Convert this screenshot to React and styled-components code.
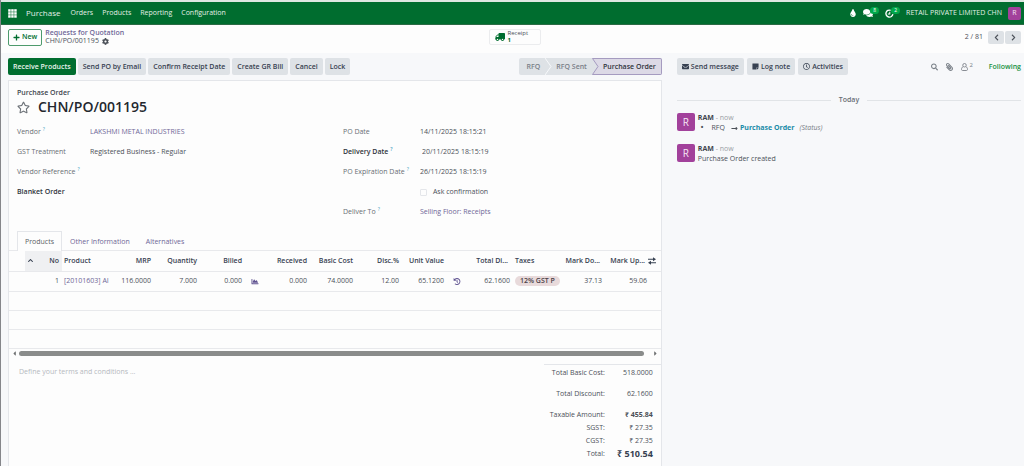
import React, { useState } from 'react'
import styled, { createGlobalStyle } from 'styled-components'
import {
  FaTruck, FaTint, FaComments, FaEnvelope, FaStickyNote, FaRegClock, FaSearch,
  FaPaperclip, FaCog, FaPlus, FaRegStar, FaHistory, FaChartArea,
  FaChevronLeft, FaChevronRight, FaChevronUp, FaCaretLeft, FaCaretRight, FaLongArrowAltRight,
} from 'react-icons/fa'

const leftFields = [
  { label: 'Vendor', help: true, value: 'LAKSHMI METAL INDUSTRIES', link: true },
  { label: 'GST Treatment', value: 'Registered Business - Regular' },
  { label: 'Vendor Reference', help: true },
  { label: 'Blanket Order', strong: true },
]

const columns = [
  { width: 16 },
  { width: 37, label: 'No', value: '1', sorted: true },
  { width: 49, label: 'Product', value: '[20101603] AI', left: true, link: true },
  { width: 43, label: 'MRP', value: '116.0000' },
  { width: 46, label: 'Quantity', value: '7.000' },
  { width: 45, label: 'Billed', value: '0.000' },
  { width: 18, icon: 'Forecast' },
  { width: 47, label: 'Received', value: '0.000' },
  { width: 46, label: 'Basic Cost', value: '74.0000' },
  { width: 46, label: 'Disc.%', value: '12.00' },
  { width: 45, label: 'Unit Value', value: '65.1200' },
  { width: 18, icon: 'History' },
  { width: 48, label: 'Total Di...', value: '62.1600', cut: true },
  { width: 46, label: 'Taxes', value: '12% GST P', left: true, tag: true },
  { width: 46, label: 'Mark Do...', value: '37.13', cut: true },
  { width: 45, label: 'Mark Up...', value: '59.06', cut: true },
  { width: 11, options: true },
]

const totals = [
  { label: 'Total Basic Cost:', value: '518.0000', tall: true },
  { label: 'Total Discount:', value: '62.1600', tall: true },
  { label: 'Taxable Amount:', value: '₹ 455.84', bold: true },
  { label: 'SGST:', value: '₹ 27.35' },
  { label: 'CGST:', value: '₹ 27.35' },
  { label: 'Total:', value: '₹ 510.54', big: true },
]

const Field = ({ label, help, strong, htmlFor, children }) => (
  <FieldRow>
    <FieldLabel as={htmlFor ? 'label' : 'span'} htmlFor={htmlFor} $strong={strong}>
      {label}
      {help && <Help>?</Help>}
    </FieldLabel>
    <FieldValue>{children}</FieldValue>
  </FieldRow>
)

const Message = ({ children }) => (
  <MessageRow>
    <Avatar $size={18}>R</Avatar>
    <MessageBody>
      <div><Author>RAM</Author> <Muted>- now</Muted></div>
      {children}
    </MessageBody>
  </MessageRow>
)

const Cell = ({ col }) => {
  if (col.icon) {
    return (
      <Td $left>
        <CellButton aria-label={col.icon}>
          {col.icon === 'History' ? <FaHistory /> : <FaChartArea />}
        </CellButton>
      </Td>
    )
  }
  return (
    <Td $left={col.left}>
      {col.tag ? <Tag>{col.value}</Tag> : col.link ? <Link href="#product">{col.value}</Link> : col.value}
    </Td>
  )
}

const App = () => {
  const [ask, setAsk] = useState(false)
  const [tab, setTab] = useState('Products')

  return (
    <Page>
      <GlobalStyle />
      <Navbar>
        <AppsButton aria-label="Apps">
          <svg viewBox="0 0 9 9">
            {[0, 3, 6].map(y => [0, 3, 6].map(x => (
              <rect key={`${x}-${y}`} x={x + 0.2} y={y + 0.2} width="2.5" height="2.5" fill="#fff" />
            )))}
          </svg>
        </AppsButton>
        <Brand href="#purchase">Purchase</Brand>
        <Menu>
          {['Orders', 'Products', 'Reporting', 'Configuration'].map(item => (
            <NavLink key={item} href={`#${item}`}>{item}</NavLink>
          ))}
        </Menu>
        <Tray>
          <TrayButton aria-label="Theme"><FaTint /></TrayButton>
          <TrayButton aria-label="Messages" $size={10}><FaComments /><Badge>8</Badge></TrayButton>
          <TrayButton aria-label="Activities" $size={9}>
            <svg viewBox="0 0 16 16" fill="none" stroke="#fff" strokeWidth="2.4">
              <path d="M10 2.3A6.2 6.2 0 1 0 14 9" />
              <path d="M8.500 5V9H5" strokeWidth="1.800" />
            </svg>
            <Badge>2</Badge>
          </TrayButton>
          <Company>RETAIL PRIVATE LIMITED CHN</Company>
          <Avatar $size={13}>R</Avatar>
        </Tray>
      </Navbar>

      <ControlPanel>
        <Crumbs>
          <NewButton><FaPlus />New</NewButton>
          <div>
            <Link href="#rfq" $medium>Requests for Quotation</Link>
            <Current>CHN/PO/001195 <FaCog /></Current>
          </div>
        </Crumbs>
        <StatButton>
          <FaTruck />
          <span>Receipt<b>1</b></span>
        </StatButton>
        <Pager>
          <span>2 / 81</span>
          <PagerButtons>
            <PagerButton aria-label="Previous"><FaChevronLeft /></PagerButton>
            <PagerButton aria-label="Next"><FaChevronRight /></PagerButton>
          </PagerButtons>
        </Pager>
      </ControlPanel>

      <Content>
        <FormColumn>
          <StatusBar>
            <Buttons>
              <Button $primary>Receive Products</Button>
              <Button>Send PO by Email</Button>
              <Button>Confirm Receipt Date</Button>
              <Button>Create GR Bill</Button>
              <Button>Cancel</Button>
              <Button>Lock</Button>
            </Buttons>
            <Steps>
              <Step $first>RFQ</Step>
              <Chevron viewBox="0 0 7 17">
                <path d="M0 0L6 8.500L0 17" fill="none" stroke="#f7f8fa" />
              </Chevron>
              <Step>RFQ Sent</Step>
              <Chevron viewBox="0 0 7 17">
                <path d="M0 0H7V17H0L6 8.500Z" fill="#dcd9e6" />
                <path d="M7 .5H.5L6 8.500L.5 16.500H7" fill="none" stroke="#a59bc0" />
              </Chevron>
              <Step $active>Purchase Order</Step>
            </Steps>
          </StatusBar>

          <Sheet>
            <Heading>
              <Kind>Purchase Order</Kind>
              <TitleRow>
                <StarButton aria-label="Priority"><FaRegStar /></StarButton>
                <Title>CHN/PO/001195</Title>
              </TitleRow>
            </Heading>

            <Groups>
              <Group $label={73}>
                {leftFields.map(f => (
                  <Field key={f.label} label={f.label} help={f.help} strong={f.strong}>
                    {f.link ? <Link href="#vendor">{f.value}</Link> : f.value}
                  </Field>
                ))}
              </Group>
              <Group $label={77}>
                <Field label="PO Date">14/11/2025 18:15:21</Field>
                <Field label="Delivery Date" help strong htmlFor="delivery">
                  <DateInput id="delivery" defaultValue="20/11/2025 18:15:19" />
                </Field>
                <Field label="PO Expiration Date" help>26/11/2025 18:15:19</Field>
                <Field>
                  <CheckLabel>
                    <Check type="checkbox" checked={ask} onChange={() => setAsk(!ask)} />
                    Ask confirmation
                  </CheckLabel>
                </Field>
                <Field label="Deliver To" help><Link href="#deliver">Selling Floor: Receipts</Link></Field>
              </Group>
            </Groups>

            <Tabs role="tablist">
              {['Products', 'Other Information', 'Alternatives'].map(name => (
                <Tab key={name} role="tab" aria-selected={tab === name} $active={tab === name} onClick={() => setTab(name)}>
                  {name}
                </Tab>
              ))}
            </Tabs>

            <Table>
              <colgroup>
                {columns.map((c, i) => <Col key={i} $width={c.width} />)}
              </colgroup>
              <thead>
                <tr>
                  {columns.map((c, i) => (
                    <Th key={i} $left={c.left || c.options} $sorted={c.sorted} $cut={c.cut}>
                      {c.sorted ? <SortHead><FaChevronUp />{c.label}</SortHead> : c.label}
                      {c.options && (
                        <OptionsButton aria-label="Columns">
                          <svg viewBox="0 0 8 8" fill="#374151">
                            <path d="M0 1.700H5V.2L8 2.200L5 4.200V2.700H0ZM8 5.300H3V3.800L0 5.800L3 7.800V6.300H8Z" />
                          </svg>
                        </OptionsButton>
                      )}
                    </Th>
                  ))}
                </tr>
              </thead>
              <tbody>
                <tr>{columns.map((c, i) => <Cell key={i} col={c} />)}</tr>
                {[1, 2, 3].map(n => (
                  <tr key={n}><EmptyTd colSpan={columns.length} /></tr>
                ))}
              </tbody>
            </Table>
            <ScrollTrack>
              <FaCaretLeft />
              <ScrollThumb />
              <FaCaretRight />
            </ScrollTrack>

            <Footer>
              <Terms aria-label="Terms and conditions" placeholder="Define your terms and conditions ..." />
              <Totals>
                {totals.map(t => (
                  <Total key={t.label} $tall={t.tall}>
                    <TotalLabel>{t.label}</TotalLabel>
                    <TotalValue $bold={t.bold} $big={t.big}>{t.value}</TotalValue>
                  </Total>
                ))}
              </Totals>
            </Footer>
          </Sheet>
        </FormColumn>

        <Chatter>
          <ChatterBar>
            <Buttons>
              <Button><FaEnvelope />Send message</Button>
              <Button><FaStickyNote />Log note</Button>
              <Button><FaRegClock />Activities</Button>
            </Buttons>
            <ChatterTools>
              <ToolButton aria-label="Search"><FaSearch /></ToolButton>
              <ToolButton aria-label="Attach" $flip><FaPaperclip /></ToolButton>
              <ToolButton aria-label="Followers">
                <svg viewBox="0 0 14 16" fill="none" stroke="currentColor" strokeWidth="1.800">
                  <circle cx="7" cy="4.500" r="3.500" />
                  <path d="M4 7.500C2 8.500 1 10.500 1 12.500C1 14.500 2 15 3.500 15H10.500C12 15 13 14.500 13 12.500C13 10.500 12 8.500 10 7.500" />
                </svg>
                <sup>2</sup>
              </ToolButton>
              <Following>Following</Following>
            </ChatterTools>
          </ChatterBar>
          <Today>Today</Today>
          <Message>
            <Changes>
              <li>
                <span>RFQ</span>
                <FaLongArrowAltRight />
                <NewValue>Purchase Order</NewValue>
                <i>(Status)</i>
              </li>
            </Changes>
          </Message>
          <Message><div>Purchase Order created</div></Message>
        </Chatter>
      </Content>
    </Page>
  )
}

export default App

const GlobalStyle = createGlobalStyle`
  * {
    box-sizing: border-box;
  }
  body {
    margin: 0;
    background: #f7f8fa;
    color: #4b5058;
    font: 7px/10px "Open Sans", "Noto Sans", sans-serif;
  }
  button, input, textarea {
    font: inherit;
    color: inherit;
    margin: 0;
    padding: 0;
    border: 0;
    background: none;
  }
  button {
    cursor: pointer;
  }
  a {
    text-decoration: none;
  }
  svg {
    flex: none;
  }
`;

const Page = styled.div`
  min-height: 100vh;
  display: flex;
  flex-direction: column;
  border-left: 1px solid #85868a;
`;

const Navbar = styled.nav`
  display: flex;
  align-items: center;
  height: 25px;
  padding: 0 3px 0 7px;
  background: #006d2f;
  border-top: 2px solid #dfe8e2;
  border-bottom: 1px solid #2b6b45;
  color: #e3efe7;
`;

const AppsButton = styled.button`
  display: flex;
  svg {
    width: 9px;
    height: 9px;
  }
`;

const Brand = styled.a`
  margin: 0 10px 0 9px;
  font-size: 8px;
  color: inherit;
`;

const Menu = styled.div`
  display: flex;
  gap: 9px;
`;

const NavLink = styled.a`
  color: inherit;
`;

const Tray = styled.div`
  display: flex;
  align-items: center;
  gap: 6px;
  margin-left: auto;
`;

const TrayButton = styled.button`
  display: flex;
  align-items: center;
  color: #fff;
  svg {
    width: ${props => props.$size || 8}px;
    height: ${props => props.$size || 8}px;
  }
`;

const Badge = styled.span`
  margin: -5px 0 0 -3px;
  padding: 0 3px;
  border-radius: 4px;
  background: #00a84a;
  font-size: 5px;
  line-height: 7px;
`;

const Company = styled.span`
  white-space: nowrap;
`;

const Avatar = styled.span`
  flex: none;
  display: flex;
  align-items: center;
  justify-content: center;
  width: ${props => props.$size}px;
  height: ${props => props.$size}px;
  border-radius: 2px;
  background: #a2419b;
  color: #f6e6f5;
  font-size: ${props => (props.$size > 15 ? 10 : 7)}px;
`;

const ControlPanel = styled.header`
  display: grid;
  grid-template-columns: 1fr auto 1fr;
  align-items: center;
  height: 28px;
  padding: 0 3px 4px 7px;
  background: #fdfdfd;
`;

const Crumbs = styled.div`
  display: flex;
  align-items: center;
  gap: 3px;
  line-height: 8px;
`;

const NewButton = styled.button`
  display: flex;
  align-items: center;
  gap: 2px;
  height: 17px;
  padding: 0 4px;
  border: 1px solid #4d9a6c;
  border-radius: 2px;
  color: #006d2f;
  font-weight: 600;
`;

const Current = styled.div`
  display: flex;
  align-items: center;
  gap: 3px;
`;

const Link = styled.a`
  color: #6f6797;
  font-weight: ${props => (props.$medium ? 600 : 400)};
`;

const StatButton = styled.button`
  display: flex;
  align-items: center;
  gap: 3px;
  width: 52px;
  height: 16px;
  padding: 0 5px;
  border: 1px solid #ebecee;
  border-radius: 2px;
  font-size: 6px;
  line-height: 7px;
  text-align: left;
  svg {
    width: 10px;
    height: 10px;
    color: #006d2f;
    transform: scaleX(-1);
  }
  b {
    display: block;
    color: #006d2f;
  }
`;

const Pager = styled.div`
  display: flex;
  align-items: center;
  justify-content: flex-end;
  gap: 5px;
`;

const PagerButtons = styled.div`
  display: flex;
  gap: 1px;
`;

const PagerButton = styled.button`
  display: flex;
  align-items: center;
  justify-content: center;
  width: 16px;
  height: 13px;
  border-radius: 2px;
  background: #dee2e6;
`;

const Content = styled.main`
  flex: 1;
  display: flex;
`;

const FormColumn = styled.section`
  flex: 1;
  min-width: 0;
  display: flex;
  flex-direction: column;
  padding: 5px 0 0 7px;
`;

const StatusBar = styled.div`
  display: flex;
  justify-content: space-between;
`;

const Buttons = styled.div`
  display: flex;
  gap: 2px;
`;

const Button = styled.button`
  display: flex;
  align-items: center;
  gap: 2px;
  height: 17px;
  padding: 0 5px;
  border-radius: 2px;
  background: ${props => (props.$primary ? '#006d2f' : '#dee2e6')};
  color: ${props => (props.$primary ? '#e8f3ec' : '#374151')};
  font-weight: 600;
  white-space: nowrap;
`;

const Steps = styled.div`
  display: flex;
  height: 17px;
  border-radius: 2px;
  background: #dee2e6;
`;

const Step = styled.button`
  padding: 0 5px 0 ${props => (props.$first ? 8 : 4)}px;
  color: ${props => (props.$active ? '#2f333b' : '#7a8088')};
  font-weight: 600;
  white-space: nowrap;
  ${props => props.$active && `
    background: #dcd9e6;
    border: 1px solid #a59bc0;
    border-left: 0;
    border-radius: 0 2px 2px 0;
  `}
`;

const Chevron = styled.svg`
  width: 7px;
  height: 17px;
`;

const Sheet = styled.div`
  flex: 1;
  margin-top: 5px;
  background: #fdfdfd;
  border: 1px solid #e4e6ea;
  border-bottom: 0;
`;

const Heading = styled.div`
  padding: 7px 8px 0;
`;

const Kind = styled.div`
  font-weight: 600;
  color: #40454d;
`;

const TitleRow = styled.div`
  display: flex;
  align-items: center;
  gap: 8px;
`;

const StarButton = styled.button`
  display: flex;
  color: #6d7278;
  svg {
    width: 13px;
    height: 13px;
  }
`;

const Title = styled.h1`
  margin: 0;
  font-size: 14px;
  line-height: 18px;
  font-weight: 600;
  color: #23272e;
`;

const Groups = styled.div`
  display: grid;
  grid-template-columns: 1fr 1fr;
  gap: 16px;
  padding: 6px 8px 0;
`;

const FieldRow = styled.div`
  display: flex;
  align-items: center;
  height: 20px;
`;

const FieldLabel = styled.span`
  flex: none;
  white-space: nowrap;
  color: ${props => (props.$strong ? '#2f333b' : '#686d74')};
  font-weight: ${props => (props.$strong ? 600 : 500)};
`;

const Group = styled.div`
  ${FieldLabel} {
    width: ${props => props.$label}px;
  }
`;

const Help = styled.sup`
  margin-left: 2px;
  font-size: 5px;
  line-height: 5px;
  color: #3f9fc4;
`;

const FieldValue = styled.div`
  flex: 1;
`;

const DateInput = styled.input`
  width: 100%;
  padding-left: 2px;
`;

const CheckLabel = styled.label`
  display: flex;
  align-items: center;
  gap: 6px;
`;

const Check = styled.input`
  appearance: none;
  width: 7px;
  height: 7px;
  border: 1px solid #e4e6ea;
  border-radius: 1px;
  &:checked {
    background: #006d2f;
  }
`;

const Tabs = styled.div`
  display: flex;
  margin-top: 9px;
  padding: 0 8px;
  border-bottom: 1px solid #e8e9ec;
`;

const Tab = styled.button`
  height: 20px;
  margin-bottom: -1px;
  padding: 0 7px;
  border: 1px solid ${props => (props.$active ? '#e4e6ea' : 'transparent')};
  border-bottom: 0;
  background: ${props => (props.$active ? '#fdfdfd' : 'none')};
  color: ${props => (props.$active ? '#5a5f66' : '#6f6797')};
  font-weight: 500;
`;

const Table = styled.table`
  width: 100%;
  table-layout: fixed;
  border-collapse: collapse;
`;

const Col = styled.col`
  width: ${props => props.$width}px;
`;

const Th = styled.th`
  height: 20px;
  padding: 0 ${props => (props.$cut ? 5 : 3)}px 0 0;
  ${props => props.$left && 'padding: 0 0 0 2px;'}
  border-bottom: 1px solid #e8e9ec;
  background: ${props => (props.$sorted ? '#eff0f2' : 'none')};
  text-align: ${props => (props.$left ? 'left' : 'right')};
  font-weight: 600;
  color: #374151;
  white-space: nowrap;
`;

const SortHead = styled.span`
  display: flex;
  align-items: center;
  justify-content: space-between;
  padding-left: 3px;
  svg {
    width: 5px;
  }
`;

const OptionsButton = styled.button`
  display: flex;
  margin-left: -4px;
  svg {
    width: 8px;
    height: 8px;
  }
`;

const Td = styled.td`
  height: 20px;
  padding: 0 3px 0 0;
  ${props => props.$left && 'padding: 0 0 0 2px;'}
  border-bottom: 1px solid #e8e9ec;
  text-align: ${props => (props.$left ? 'left' : 'right')};
  white-space: nowrap;
`;

const EmptyTd = styled.td`
  height: 19px;
  padding: 0;
  border-bottom: 1px solid #e8e9ec;
`;

const CellButton = styled.button`
  display: flex;
  margin-left: 4px;
  color: #5f5290;
  svg {
    width: 8px;
  }
`;

const Tag = styled.span`
  display: inline-block;
  padding: 0 5px;
  border-radius: 5px;
  background: #e8dadb;
  color: #4b3f48;
  font-weight: 600;
`;

const ScrollTrack = styled.div`
  display: flex;
  align-items: center;
  justify-content: space-between;
  height: 9px;
  padding: 0 2px;
  color: #6d6f70;
`;

const ScrollThumb = styled.div`
  flex: 1;
  height: 5px;
  margin: 0 8px 0 1px;
  border-radius: 3px;
  background: #8a8c8b;
`;

const Footer = styled.div`
  display: flex;
  padding-top: 6px;
`;

const Terms = styled.textarea`
  flex: 1;
  height: 40px;
  padding: 3px 10px;
  resize: none;
  &::placeholder {
    color: #b5b9be;
    opacity: 1;
  }
`;

const Totals = styled.div`
  width: 18%;
  padding: 2px 8px 0 0;
  border-top: 1px solid #e4e6ea;
`;

const Total = styled.div`
  display: grid;
  grid-template-columns: 1fr 48px;
  align-items: center;
  height: 13px;
  margin-bottom: ${props => (props.$tall ? 8 : 0)}px;
  text-align: right;
  white-space: nowrap;
`;

const TotalLabel = styled.span`
  font-weight: 500;
`;

const TotalValue = styled.span`
  font-size: ${props => (props.$big ? 9 : 7)}px;
  font-weight: ${props => (props.$big || props.$bold ? 700 : 400)};
  ${props => props.$big && 'color: #374151;'}
`;

const Chatter = styled.aside`
  flex: 0 0 35.4%;
  padding: 5px 3px 0 15px;
`;

const ChatterBar = styled.div`
  display: flex;
  align-items: center;
  justify-content: space-between;
  ${Buttons} {
    gap: 3px;
  }
`;

const ChatterTools = styled.div`
  display: flex;
  align-items: center;
  gap: 8px;
`;

const ToolButton = styled.button`
  display: flex;
  align-items: center;
  color: #7a8088;
  svg {
    width: 7px;
    height: 8px;
    ${props => props.$flip && 'transform: scaleX(-1);'}
  }
  sup {
    margin: -4px 0 0 1px;
    font-size: 6px;
    line-height: 6px;
  }
`;

const Following = styled.button`
  margin-left: 8px;
  color: #16913f;
  font-weight: 600;
`;

const Today = styled.div`
  display: flex;
  align-items: center;
  gap: 8px;
  margin: 20px 0 8px;
  font-weight: 600;
  color: #686d74;
  &::before, &::after {
    content: '';
    flex: 1;
    height: 1px;
    background: #e1e4e7;
  }
`;

const MessageRow = styled.div`
  display: flex;
  gap: 3px;
  margin-bottom: 11px;
`;

const MessageBody = styled.div`
  height: 20px;
`;

const Author = styled.b`
  color: #40454d;
`;

const Muted = styled.span`
  color: #9a9fa5;
`;

const Changes = styled.ul`
  margin: 0;
  padding: 0;
  list-style: none;
  li {
    display: flex;
    align-items: center;
    gap: 2px;
  }
  li::before {
    content: '•';
    margin: 0 6px 0 3px;
    font-weight: 700;
  }
  span {
    margin-right: 4px;
  }
  i {
    margin-left: 3px;
    color: #7a8088;
  }
`;

const NewValue = styled.b`
  color: #1a8ba8;
`;
